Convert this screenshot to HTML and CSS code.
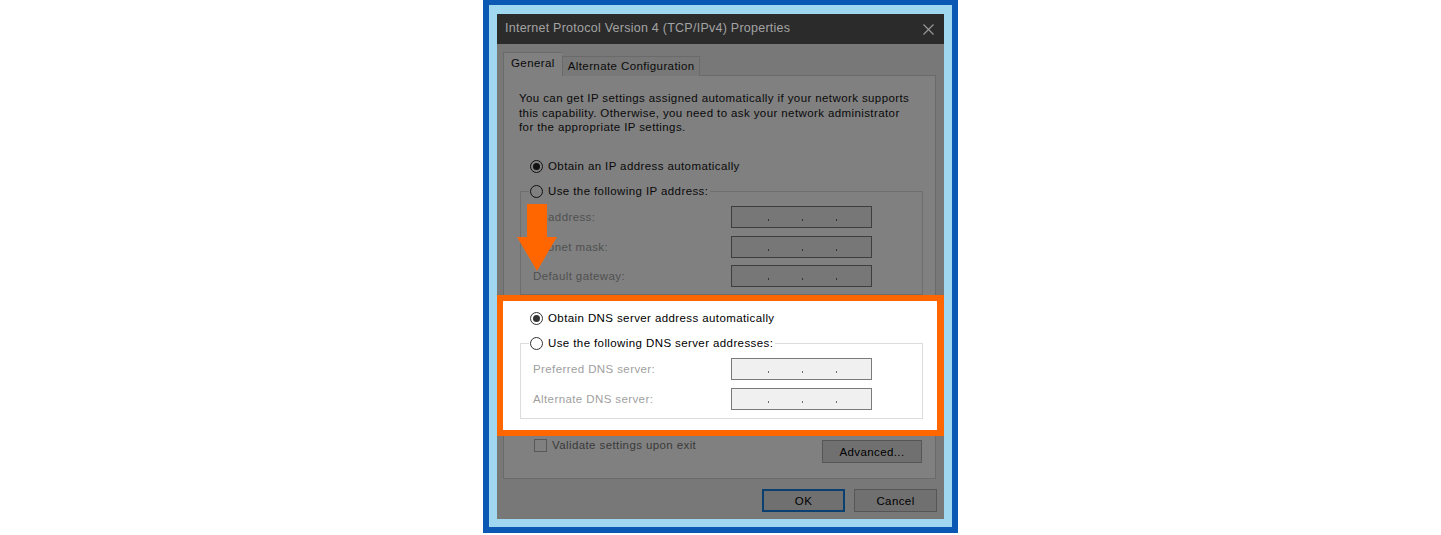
FILE: index.html
```html
<!DOCTYPE html>
<html lang="en">
<head>
    <meta charset="UTF-8">
    <meta name="viewport" content="width=device-width, initial-scale=1.0">
    <title>IPv4 Properties - DNS</title>
    <link rel="stylesheet" href="styles.css">
</head>
<body>

    <div class="frame">
        <div class="dialog">
            <div class="titlebar">
                <span>Internet Protocol Version 4 (TCP/IPv4) Properties</span>
                <svg class="close" width="11" height="11" viewBox="0 0 11 11"><path d="M0.5 0.5 L10.5 10.5 M10.5 0.5 L0.5 10.5" stroke="#9a9a9a" stroke-width="1.1" fill="none"/></svg>
            </div>

            <div class="body">
                <div class="tabs">
                    <span class="tab active">General</span>
                    <span class="tab">Alternate Configuration</span>
                </div>

                <div class="panel">
                    <p class="intro">You can get IP settings assigned automatically if your network supports this capability. Otherwise, you need to ask your network administrator for the appropriate IP settings.</p>

                    <div class="opt first"><span class="radio on"></span>Obtain an IP address automatically</div>

                    <fieldset class="group">
                        <legend><span class="radio"></span>Use the following IP address:</legend>
                        <div class="row"><label>IP address:</label><div class="ip"><i></i><i></i><i></i></div></div>
                        <div class="row"><label>Subnet mask:</label><div class="ip"><i></i><i></i><i></i></div></div>
                        <div class="row"><label>Default gateway:</label><div class="ip"><i></i><i></i><i></i></div></div>
                    </fieldset>

                    <!-- orange arrow pointing at the DNS block -->
                    <svg class="arrow" width="40" height="67" viewBox="0 0 40 67"><path d="M10 0 H30 V33 H40 L20 67 L0 33 H10 Z" fill="#ff6600"/></svg>

                    <div class="highlight">
                        <div class="opt"><span class="radio on"></span>Obtain DNS server address automatically</div>
                        <fieldset class="group">
                            <legend><span class="radio"></span>Use the following DNS server addresses:</legend>
                            <div class="row"><label>Preferred DNS server:</label><div class="ip"><i></i><i></i><i></i></div></div>
                            <div class="row"><label>Alternate DNS server:</label><div class="ip"><i></i><i></i><i></i></div></div>
                        </fieldset>
                    </div>

                    <div class="bottom-row">
                        <div class="check"><span class="box"></span>Validate settings upon exit</div>
                        <span class="btn adv">Advanced...</span>
                    </div>
                </div>

                <div class="buttons">
                    <span class="btn ok">OK</span>
                    <span class="btn">Cancel</span>
                </div>
            </div>
        </div>
    </div>

</body>
</html>
```

FILE: styles.css
```css
* { margin: 0; padding: 0; box-sizing: border-box; font-family: "Liberation Sans", Arial, sans-serif; }
body { background: #fff; }
.frame { width: 475px; margin: 0 auto; background: #9fd7f1; border: 6px solid #0b57b4; border-top-width: 5px; padding: 9px 8px 8px 8px; }
.dialog { background: #787878; }

.titlebar { height: 30px; background: #2b2b2b; color: #a3a3a3; font-size: 12.5px; letter-spacing: 0.25px; display: flex; align-items: center; justify-content: space-between; padding: 0 10px 2px 8px; }
.close { display: block; margin-top: 2px; }

.body { padding: 8px 7px 7px 6px; font-size: 11.5px; letter-spacing: 0.4px; color: #0a0a0a; }
.tabs { display: flex; align-items: flex-end; height: 24px; margin-bottom: -1px; position: relative; z-index: 1; }
.tab { display: block; height: 20px; line-height: 19px; padding: 0 4px 0 5px; border: 1px solid #6a6a6a; border-bottom: none; background: #787878; }
.tab.active { height: 24px; line-height: 21px; padding: 0 7px 0 7px; background: #808080; border-right: none; }

.panel { position: relative; width: 433px; background: #808080; border: 1px solid #6a6a6a; padding: 15px 0 15px 0; }
.intro { width: 394px; margin-left: 15px; line-height: 14.5px; }

.opt { display: flex; align-items: center; height: 14px; margin-left: 26px; }
.opt.first { margin-top: 24.5px; }
.radio { display: inline-block; position: relative; width: 13px; height: 13px; border: 1px solid #111; border-radius: 50%; background: #808080; margin-right: 5px; }
.radio.on::after { content: ""; position: absolute; left: 2px; top: 2px; width: 7px; height: 7px; border-radius: 50%; background: #111; }

.group { margin: 11px 12px 0 16px; border: 1px solid #6e6e6e; padding: 8px 0 7px 12px; }
.group legend { display: flex; align-items: center; height: 14px; margin-left: -4px; padding: 0 2px 0 1px; }
.row { display: flex; align-items: center; height: 22px; }
.row + .row { margin-top: 7.5px; }
.row label { width: 198px; color: #505050; }
.ip { width: 141px; height: 22px; border: 1px solid #3e3e3e; background: #777; display: flex; align-items: flex-end; gap: 33px; padding: 0 0 6px 36px; }
.ip i { display: block; width: 1px; height: 2px; background: #333; }

.arrow { position: absolute; left: 13px; top: 128px; }

.highlight { position: relative; margin: 0 -9px 0 -7px; background: #fff; border: 6px solid #ff6600; border-right-width: 7px; padding: 10px 2px 11px 1px; color: #000; }
.highlight .radio { border-color: #333; background: #fff; }
.highlight .radio.on::after { background: #333; }
.highlight .group { border-color: #dcdcdc; padding-bottom: 8px; }
.highlight .row + .row { margin-top: 8px; }
.highlight .row label { color: #a0a0a0; }
.highlight .ip { border-color: #7a7a7a; background: #f0f0f0; }
.highlight .ip i { background: #6a6a7a; }

.bottom-row { display: flex; justify-content: space-between; align-items: flex-start; margin-top: 2px; padding-right: 13px; }
.check { display: flex; align-items: center; height: 14px; margin-left: 30px; color: #3a3a3a; }
.box { width: 13px; height: 13px; border: 1px solid #585858; margin-right: 5px; }
.btn { display: flex; align-items: center; justify-content: center; width: 83px; height: 23px; border: 1px solid #565656; background: #707070; color: #000; }
.btn.adv { width: 100px; margin-top: 2px; }
.btn.ok { border: 2px solid #0b3f70; }
.buttons { display: flex; justify-content: flex-end; gap: 9px; margin-top: 10px; }
```
